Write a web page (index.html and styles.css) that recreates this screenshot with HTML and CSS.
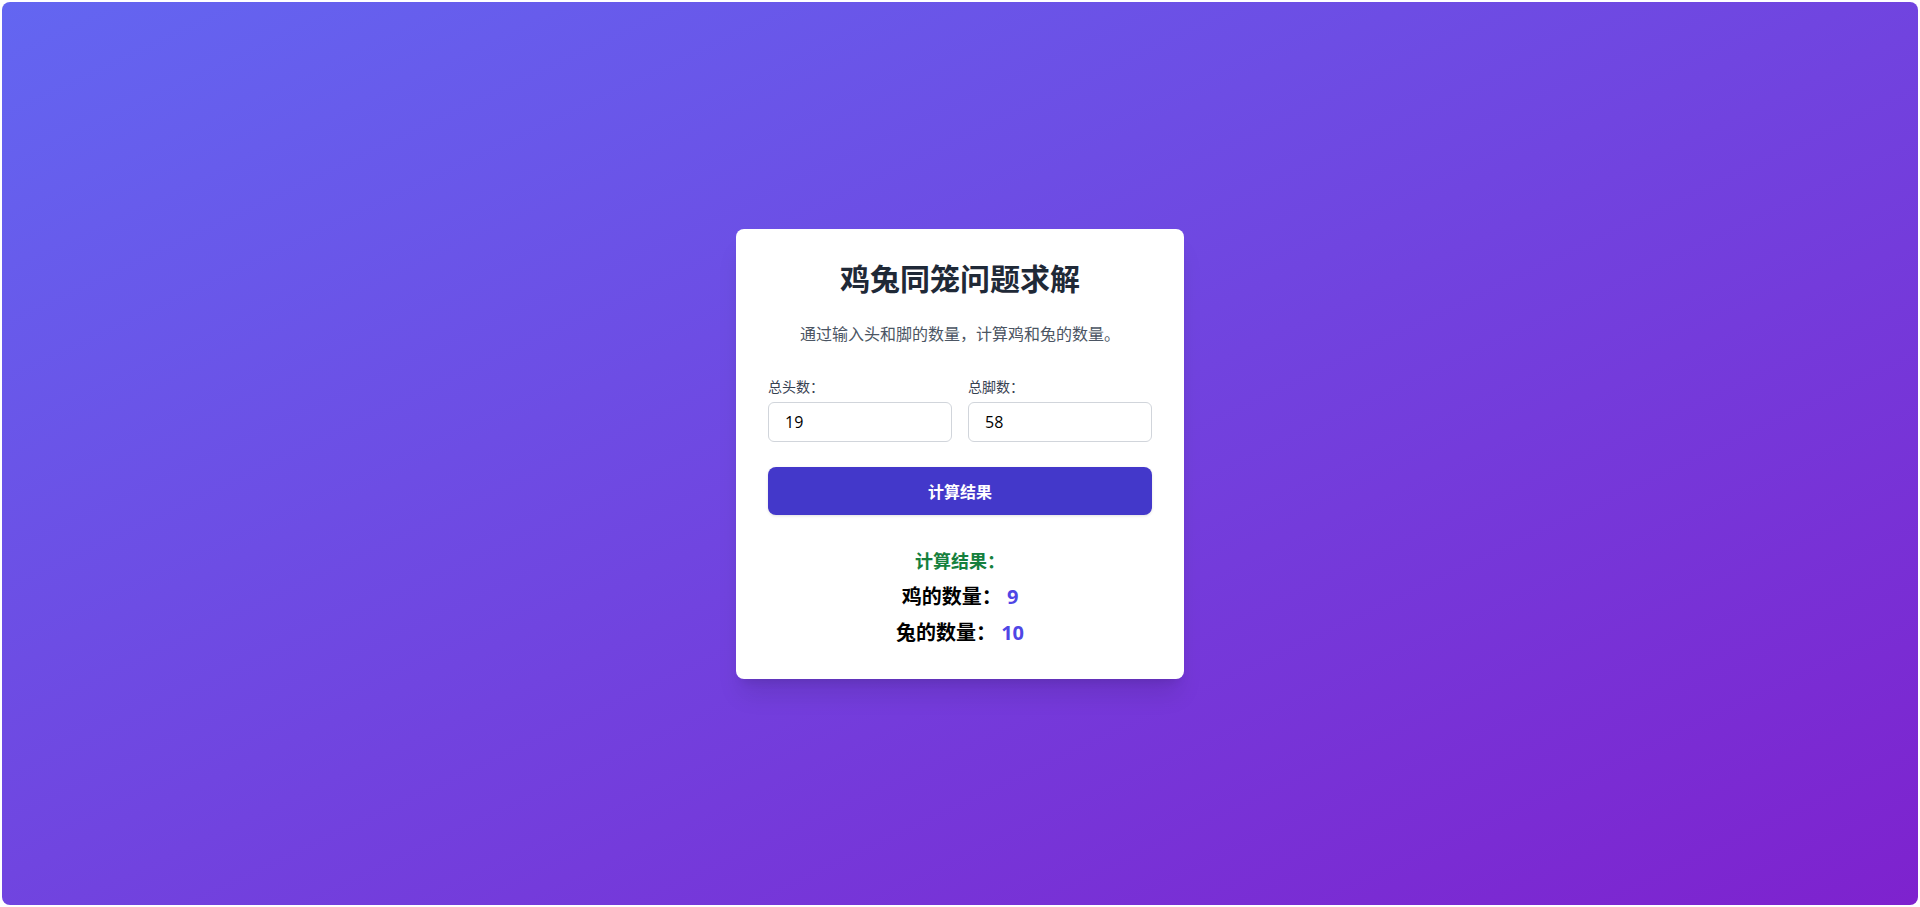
FILE: index.html
```html
<!DOCTYPE html>
<html lang="zh-CN">
<head>
<meta charset="utf-8">
<title>鸡兔同笼问题求解</title>
<link rel="stylesheet" href="styles.css">
</head>
<body>
<div class="frame">
  <div class="card">
    <h1 class="title">鸡兔同笼问题求解</h1>
    <p class="subtitle">通过输入头和脚的数量，计算鸡和兔的数量。</p>
    <div class="fields">
      <div class="field">
        <label class="label" for="heads">总头数：</label>
        <input class="input" id="heads" type="text" value="19">
      </div>
      <div class="field">
        <label class="label" for="legs">总脚数：</label>
        <input class="input" id="legs" type="text" value="58">
      </div>
    </div>
    <button class="btn" type="button">计算结果</button>
    <div class="result">
      <h3 class="result-title">计算结果：</h3>
      <p class="result-line">鸡的数量： <span class="num">9</span></p>
      <p class="result-line">兔的数量： <span class="num">10</span></p>
    </div>
  </div>
</div>
</body>
</html>
```
FILE: styles.css
```css
* { box-sizing: border-box; }
html, body { margin: 0; padding: 0; height: 100%; }
body {
  background: #ffffff;
  font-family: "Open Sans", "Noto Sans CJK SC", sans-serif;
  padding: 2px;
}
.frame {
  height: 100%;
  border-radius: 8px;
  background: linear-gradient(to bottom right, #6366f1, #7e22ce);
  display: flex;
  align-items: center;
  justify-content: center;
}
.card {
  width: 448px;
  background: #ffffff;
  border-radius: 8px;
  padding: 32px;
  box-shadow: 0 20px 25px -5px rgba(0,0,0,0.1), 0 8px 10px -6px rgba(0,0,0,0.1);
}
.title {
  margin: 0 0 25px;
  font-size: 30px;
  line-height: 36px;
  font-weight: 700;
  color: #1f2937;
  text-align: center;
}
.subtitle {
  margin: 0 0 31px;
  font-size: 16px;
  line-height: 24px;
  color: #4b5563;
  text-align: center;
}
.fields {
  display: grid;
  grid-template-columns: 1fr 1fr;
  gap: 16px;
}
.field { display: flex; flex-direction: column; min-width: 0; }
.label {
  font-size: 14px;
  line-height: 20px;
  color: #374151;
  margin-bottom: 5px;
}
.input {
  width: 100%;
  min-width: 0;
  height: 40px;
  border: 1px solid #d1d5db;
  border-radius: 6px;
  padding: 0 16px;
  font-family: inherit;
  font-size: 16px;
  color: #000;
  background: #fff;
  outline: none;
}
.btn {
  display: block;
  width: 100%;
  height: 48px;
  margin-top: 25px;
  border: 0;
  border-radius: 8px;
  background: #4338ca;
  color: #fff;
  font-family: inherit;
  font-size: 16px;
  font-weight: 700;
  box-shadow: 0 1px 3px rgba(0,0,0,0.12);
}
.result {
  margin-top: 32px;
  text-align: center;
}
.result-title {
  margin: 0 0 8px;
  font-size: 18px;
  line-height: 28px;
  font-weight: 700;
  color: #15803d;
}
.result-line {
  margin: 0 0 8px;
  font-size: 20px;
  line-height: 28px;
  font-weight: 700;
  color: #000;
}
.result-line:last-child { margin-bottom: 0; }
.num {
  font-size: 20px;
  color: #4f46e5;
}
```
